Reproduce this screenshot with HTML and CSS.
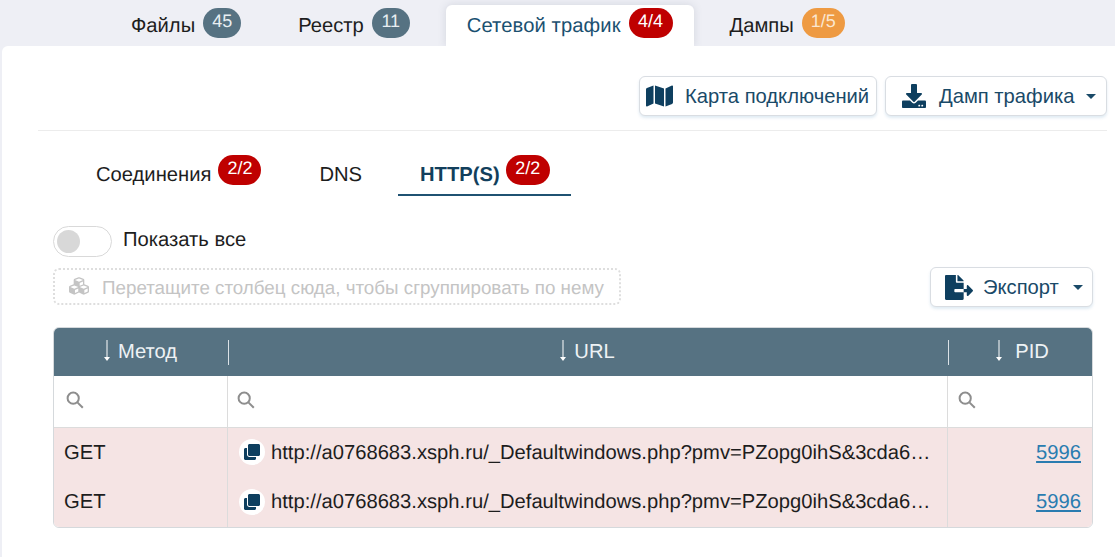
FILE: index.html
```
<!DOCTYPE html>
<html lang="ru">
<head>
<meta charset="utf-8">
<title>Сетевой трафик</title>
<link rel="stylesheet" href="styles.css">
</head>
<body>
<nav class="tabs">
  <div class="tab"><span>Файлы</span><span class="badge slate">45</span></div>
  <div class="tab"><span>Реестр</span><span class="badge slate">11</span></div>
  <div class="tab active"><span>Сетевой трафик</span><span class="badge red">4/4</span></div>
  <div class="tab"><span>Дампы</span><span class="badge orange">1/5</span></div>
</nav>
<main class="card">
  <div class="toolbar">
    <button class="btn map-btn"><svg class="ico map-ico" viewBox="0 0 576 512"><path d="M0 117.66v346.32c0 11.32 11.43 19.06 21.94 14.86L160 416V32L20.12 87.95A32.006 32.006 0 0 0 0 117.66zM192 416l192 64V96L192 32v384zM554.06 33.16L416 96v384l139.88-55.95A31.996 31.996 0 0 0 576 394.34V48.02c0-11.32-11.43-19.06-21.94-14.86z"/></svg><span>Карта подключений</span></button>
    <button class="btn dump-btn"><svg class="ico dl-ico" viewBox="0 0 512 512"><path d="M216 0h80c13.3 0 24 10.7 24 24v168h87.7c17.8 0 26.7 21.5 14.1 34.1L269.7 378.3c-7.5 7.5-19.8 7.5-27.3 0L90.1 226.1c-12.6-12.6-3.7-34.1 14.1-34.1H192V24c0-13.3 10.7-24 24-24zm296 376v112c0 13.3-10.7 24-24 24H24c-13.3 0-24-10.7-24-24V376c0-13.3 10.7-24 24-24h146.7l49 49c20.1 20.1 52.5 20.1 72.6 0l49-49H488c13.3 0 24 10.7 24 24zm-124 88c0-11-9-20-20-20s-20 9-20 20 9 20 20 20 20-9 20-20zm64 0c0-11-9-20-20-20s-20 9-20 20 9 20 20 20 20-9 20-20z"/></svg><span>Дамп трафика</span><i class="caret"></i></button>
  </div>
  <div class="subtabs">
    <div class="subtab conn"><span>Соединения</span><span class="badge red">2/2</span></div>
    <div class="subtab dns"><span>DNS</span></div>
    <div class="subtab http"><span>HTTP(S)</span><span class="badge red">2/2</span></div>
  </div>
  <div class="toggle-row">
    <div class="switch"><i class="knob"></i></div>
    <span>Показать все</span>
  </div>
  <div class="group-row">
    <div class="dropzone"><svg class="cubes" viewBox="0 0 512 512"><path d="M488.6 250.2L392 214V105.5c0-15-9.3-28.4-23.4-33.7l-100-37.5c-8.1-3.1-17.1-3.1-25.3 0l-100 37.5c-14.1 5.3-23.4 18.7-23.4 33.7V214l-96.6 36.2C9.3 255.5 0 268.9 0 283.9V394c0 13.6 7.7 26.1 19.9 32.2l100 50c10.1 5.1 22.1 5.1 32.2 0l103.9-52 103.9 52c10.1 5.1 22.1 5.1 32.2 0l100-50c12.2-6.1 19.9-18.6 19.9-32.2V283.9c0-15-9.3-28.4-23.4-33.7zM358 214.8l-85 31.9v-68.2l85-37v73.3zM154 104.1l102-38.2 102 38.2v.6l-102 41.4-102-41.4v-.6zm84 291.1l-85 42.5v-79.1l85-38.8v75.4zm0-112l-102 41.4-102-41.4v-.6l102-38.2 102 38.2v.6zm240 112l-85 42.5v-79.1l85-38.8v75.4zm0-112l-102 41.4-102-41.4v-.6l102-38.2 102 38.2v.6z"/></svg><span class="drop-text">Перетащите столбец сюда, чтобы сгруппировать по нему</span></div>
    <button class="btn export-btn"><svg class="ico exp-ico" viewBox="0 0 576 512"><path d="M384 121.9c0-6.3-2.5-12.4-7-16.9L279.1 7c-4.5-4.5-10.6-7-17-7H256v128h128zM571 308l-95.7-96.4c-10.1-10.1-27.4-3-27.4 11.3V288h-64v64h64v65.2c0 14.3 17.3 21.4 27.4 11.3L571 332c6.6-6.6 6.6-17.4 0-24zm-379 28v-32c0-8.8 7.2-16 16-16h176V160H248c-13.2 0-24-10.8-24-24V0H24C10.7 0 0 10.7 0 24v464c0 13.3 10.7 24 24 24h336c13.3 0 24-10.7 24-24V352H208c-8.8 0-16-7.2-16-16z"/></svg><span>Экспорт</span><i class="caret"></i></button>
  </div>
  <div class="grid">
    <div class="hcell"><svg class="arrow" viewBox="0 0 8 22"><path d="M3.5 0h1v17H7l-3 4-3-4h2.5z"/></svg><span>Метод</span></div>
    <div class="hcell sep"><svg class="arrow" viewBox="0 0 8 22"><path d="M3.5 0h1v17H7l-3 4-3-4h2.5z"/></svg><span>URL</span></div>
    <div class="hcell sep pid-head"><svg class="arrow" viewBox="0 0 8 22"><path d="M3.5 0h1v17H7l-3 4-3-4h2.5z"/></svg><span>PID</span></div>

    <div class="fcell"><svg class="search" viewBox="0 0 18 18"><circle cx="7.2" cy="7.2" r="5.6"/><path d="M11.4 11.4L16.8 16.8"/></svg></div>
    <div class="fcell"><svg class="search" viewBox="0 0 18 18"><circle cx="7.2" cy="7.2" r="5.6"/><path d="M11.4 11.4L16.8 16.8"/></svg></div>
    <div class="fcell"><svg class="search" viewBox="0 0 18 18"><circle cx="7.2" cy="7.2" r="5.6"/><path d="M11.4 11.4L16.8 16.8"/></svg></div>

    <div class="cell first">GET</div>
    <div class="cell url first"><span class="copy"><svg viewBox="0 0 512 512"><path d="M464 0c26.51 0 48 21.49 48 48v288c0 26.51-21.49 48-48 48H176c-26.51 0-48-21.49-48-48V48c0-26.51 21.49-48 48-48h288M176 416c-44.112 0-80-35.888-80-80V128H48c-26.51 0-48 21.49-48 48v288c0 26.51 21.49 48 48 48h288c26.51 0 48-21.49 48-48v-48H176z"/></svg></span><span class="url-text">http://a0768683.xsph.ru/_Defaultwindows.php?pmv=PZopg0ihS&amp;3cda6…</span></div>
    <div class="cell pid first"><a href="#">5996</a></div>

    <div class="cell">GET</div>
    <div class="cell url"><span class="copy"><svg viewBox="0 0 512 512"><path d="M464 0c26.51 0 48 21.49 48 48v288c0 26.51-21.49 48-48 48H176c-26.51 0-48-21.49-48-48V48c0-26.51 21.49-48 48-48h288M176 416c-44.112 0-80-35.888-80-80V128H48c-26.51 0-48 21.49-48 48v288c0 26.51 21.49 48 48 48h288c26.51 0 48-21.49 48-48v-48H176z"/></svg></span><span class="url-text">http://a0768683.xsph.ru/_Defaultwindows.php?pmv=PZopg0ihS&amp;3cda6…</span></div>
    <div class="cell pid"><a href="#">5996</a></div>
  </div>
</main>
</body>
</html>
```
FILE: styles.css
```
* { box-sizing: border-box; }
html, body { height: 100%; }
body {
  margin: 0;
  overflow: hidden;
  background: #eeeff5;
  color: #1d1d1d;
  font-family: "Liberation Sans", Arial, sans-serif;
  font-size: 20.2px;
  text-rendering: geometricPrecision;
}
.tabs {
  display: flex;
  gap: 15px;
  height: 46px;
  padding: 5px 0 0 110px;
}
.tab {
  display: flex;
  align-items: flex-start;
  gap: 8px;
  padding: 9px 21px 0;
  line-height: 24px;
  border-radius: 6px 6px 0 0;
}
.tab > .badge { margin-top: -6px; }
.tab.active {
  background: #fff;
  color: #1a5070;
  letter-spacing: .1px;
  box-shadow: 0 0 8px rgba(90, 100, 120, .18);
  clip-path: inset(-10px -10px 0 -10px);
}
.badge {
  display: inline-block;
  height: 30px;
  min-width: 38px;
  padding: 0 8px;
  border-radius: 15px;
  color: #fff;
  font-size: 18px;
  line-height: 27px;
  text-align: center;
}
.slate { background: #567282; color: #e8eef2; }
.red { background: #bf0000; min-width: 44px; }
.orange { background: #ee9a42; color: #fbe7d0; min-width: 43px; }
.card {
  position: relative;
  margin-left: 2px;
  height: 511px;
  padding: 0 8px 0 36px;
  background: #fff;
  border-radius: 6px 0 0 0;
}
.toolbar {
  display: flex;
  justify-content: flex-end;
  gap: 8px;
  height: 85px;
  padding-top: 30px;
  border-bottom: 1px solid #ececec;
}
.btn {
  display: flex;
  align-items: center;
  height: 40px;
  padding: 0;
  background: #fff;
  border: 1px solid #d9dde2;
  border-radius: 6px;
  box-shadow: 0 2px 3px rgba(60, 130, 180, .16);
  color: #1a4a68;
  font: inherit;
}
.ico { fill: #0e3f5f; flex: none; }
.map-btn { width: 238px; padding-left: 6px; }
.map-ico { width: 27px; height: 24px; margin-right: 12px; }
.dump-btn { width: 222px; padding-left: 16px; }
.dl-ico { width: 24px; height: 24px; margin-right: 13px; }
.caret {
  width: 0;
  height: 0;
  margin-left: auto;
  margin-right: 10px;
  border-left: 5px solid transparent;
  border-right: 5px solid transparent;
  border-top: 5px solid #1a4a68;
}
.subtabs {
  display: flex;
  height: 65px;
  padding-top: 18px;
}
.subtab {
  display: flex;
  align-items: flex-start;
  gap: 7px;
  height: 47px;
  line-height: 24px;
  padding-top: 14px;
}
.subtab .badge { margin-top: -8px; }
.conn { margin-left: 58px; }
.conn .badge { min-width: 43px; }
.dns { margin-left: 58px; }
.http {
  margin-left: 36px;
  width: 173px;
  gap: 6px;
  padding-left: 22px;
  color: #123f5c;
  font-weight: 700;
  border-bottom: 2px solid #1f5272;
}
.http .badge { font-weight: 400; }
.toggle-row {
  display: flex;
  align-items: center;
  gap: 11px;
  height: 31px;
  margin: 30px 0 0 15px;
}
.toggle-row span { margin-top: -3px; }
.switch {
  display: flex;
  align-items: center;
  width: 59px;
  height: 31px;
  padding-left: 3px;
  border: 1px solid #d9d9d9;
  border-radius: 16px;
  background: #fff;
}
.knob {
  width: 23px;
  height: 23px;
  border-radius: 50%;
  background: #d8d8d8;
}
.group-row {
  display: flex;
  justify-content: space-between;
  align-items: center;
  margin: 10px 14px 0 15px;
}
.dropzone {
  display: flex;
  align-items: center;
  width: 568px;
  height: 37px;
  margin-bottom: 2px;
  padding-left: 14px;
  border: 2px dotted #dedede;
  border-radius: 6px;
  color: #c4c4c4;
  font-size: 18.8px;
  white-space: nowrap;
}
.drop-text { padding-top: 3px; }
.cubes { width: 20px; height: 20px; margin-right: 13px; fill: #c4c4c4; flex: none; }
.export-btn { width: 163px; padding-left: 14px; }
.exp-ico { width: 28px; height: 25px; margin-right: 10px; }
.export-btn .caret { margin-right: 9px; }
.grid {
  display: grid;
  grid-template-columns: 174px 720px 1fr;
  grid-template-rows: 48px 52px 49px 50px;
  margin: 20px 14px 0 15px;
  border: 1px solid #d5d9dc;
  border-radius: 6px;
  overflow: hidden;
}
.hcell {
  position: relative;
  display: flex;
  align-items: center;
  justify-content: center;
  gap: 7px;
  padding-right: 2px;
  background: #567282;
  color: #eef2f5;
}
.pid-head { gap: 12px; padding-right: 0; padding-left: 4px; }
.sep::before {
  content: "";
  position: absolute;
  left: 0;
  top: 12px;
  height: 25px;
  width: 1px;
  background: #dbe2e7;
}
.arrow { width: 8px; height: 22px; fill: #fff; margin-top: -3px; }
.fcell {
  display: flex;
  align-items: center;
  padding: 0 0 4px 12px;
  background: #fff;
  border-right: 1px solid #dcdcdc;
  border-bottom: 1px solid #dcdcdc;
}
.fcell:nth-child(5) { padding-left: 9px; }
.fcell:nth-child(6) { border-right: 0; padding-left: 10px; }
.search { width: 18px; height: 18px; fill: none; stroke: #8e8e8e; stroke-width: 2; }
.cell {
  display: flex;
  align-items: center;
  padding: 0 10px;
  background: #f5e4e4;
  border-right: 1px solid #dcdcdc;
  min-width: 0;
}
.cell.first { padding-top: 2px; }
.cell.first .copy { margin-top: -4px; }
.cell.pid { justify-content: flex-end; border-right: 0; padding-right: 11px; }
.cell.url { padding-left: 11px; padding-right: 10px; }
.copy {
  display: flex;
  align-items: center;
  justify-content: center;
  flex: none;
  width: 26px;
  height: 26px;
  margin-right: 6px;
  background: #fff;
  border-radius: 50%;
}
.copy svg { width: 16px; height: 16px; fill: #0e3f5f; }
.url-text { white-space: nowrap; }
.pid a { color: #2a7cb0; }
```
